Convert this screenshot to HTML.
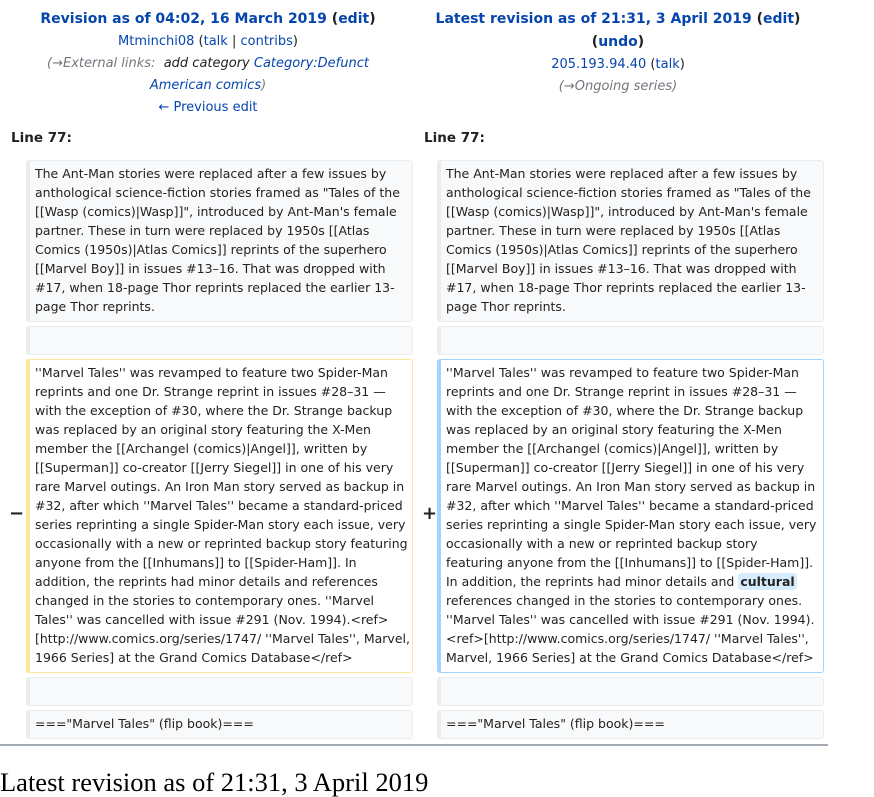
<!DOCTYPE html>
<html><head><meta charset="utf-8"><style>
body{margin:0;background:#fff;font-family:"DejaVu Sans",sans-serif;color:#202122;width:874px;height:781px;overflow:hidden;position:relative}
.h{position:absolute;text-align:center;font-size:13px;line-height:22px;white-space:nowrap;color:#202122}
.h a{color:#0645ad;text-decoration:none}
.b{font-weight:bold}
.t{font-size:14px}
.c{color:#72777d;font-style:italic}
.ln{position:absolute;top:130px;font-weight:bold;font-size:13.5px}
.box{position:absolute;box-sizing:border-box;border:1px solid #eaecf0;border-left:4px solid #eaecf0;background:#f8f9fa;border-radius:3px;padding:3px 0 0 5px;font-size:12.5px;line-height:19px;white-space:nowrap;color:#222}
.del{background:#fff;border-color:#ffe49c}
.add{background:#fff;border-color:#a3d3ff}
.m{position:absolute;font-size:18px;font-weight:bold;top:503px}
hl{background:#d8ecff;font-weight:bold;border-radius:3px;padding:1px 2px}
</style></head><body>
<div class="h" style="left:0;width:416px;top:8px">
<span class="b t"><a>Revision as of 04:02, 16 March 2019</a> (<a>edit</a>)</span><br>
<a>Mtminchi08</a> (<a>talk</a> | <a>contribs</a>)<br>
<span class="c">(→External links: &nbsp;<span style="color:#202122">add category</span> <a>Category:Defunct</a></span><br>
<span class="c"><a>American comics</a>)</span><br>
<a>← Previous edit</a></div>
<div class="h" style="left:412px;width:412px;top:8px">
<span class="b t"><a>Latest revision as of 21:31, 3 April 2019</a> (<a>edit</a>)</span><br>
<span class="b" style="font-size:14px">(<a>undo</a>)</span><br>
<a>205.193.94.40</a> (<a>talk</a>)<br>
<span class="c">(→Ongoing series)</span></div>
<div class="ln" style="left:11px">Line 77:</div>
<div class="ln" style="left:424px">Line 77:</div>

<div class="box" style="left:26px;top:160px;width:387px;height:162px">The Ant-Man stories were replaced after a few issues by<br>anthological science-fiction stories framed as "Tales of the<br>[[Wasp (comics)|Wasp]]", introduced by Ant-Man's female<br>partner. These in turn were replaced by 1950s [[Atlas<br>Comics (1950s)|Atlas Comics]] reprints of the superhero<br>[[Marvel Boy]] in issues #13–16. That was dropped with<br>#17, when 18-page Thor reprints replaced the earlier 13-<br>page Thor reprints.</div>
<div class="box" style="left:437px;top:160px;width:387px;height:162px">The Ant-Man stories were replaced after a few issues by<br>anthological science-fiction stories framed as "Tales of the<br>[[Wasp (comics)|Wasp]]", introduced by Ant-Man's female<br>partner. These in turn were replaced by 1950s [[Atlas<br>Comics (1950s)|Atlas Comics]] reprints of the superhero<br>[[Marvel Boy]] in issues #13–16. That was dropped with<br>#17, when 18-page Thor reprints replaced the earlier 13-<br>page Thor reprints.</div>
<div class="box" style="left:26px;top:326px;width:387px;height:29px"></div>
<div class="box" style="left:437px;top:326px;width:387px;height:29px"></div>
<div class="m" style="left:9px">−</div>
<div class="m" style="left:422px">+</div>
<div class="box del" style="left:26px;top:359px;width:387px;height:314px">''Marvel Tales'' was revamped to feature two Spider-Man<br>reprints and one Dr. Strange reprint in issues #28–31 —<br>with the exception of #30, where the Dr. Strange backup<br>was replaced by an original story featuring the X-Men<br>member the [[Archangel (comics)|Angel]], written by<br>[[Superman]] co-creator [[Jerry Siegel]] in one of his very<br>rare Marvel outings. An Iron Man story served as backup in<br>#32, after which ''Marvel Tales'' became a standard-priced<br>series reprinting a single Spider-Man story each issue, very<br>occasionally with a new or reprinted backup story featuring<br>anyone from the [[Inhumans]] to [[Spider-Ham]]. In<br>addition, the reprints had minor details and references<br>changed in the stories to contemporary ones. ''Marvel<br>Tales'' was cancelled with issue #291 (Nov. 1994).&lt;ref&gt;<br>[http://www.comics.org/series/1747/ ''Marvel Tales'', Marvel,<br>1966 Series] at the Grand Comics Database&lt;/ref&gt;</div>
<div class="box add" style="left:437px;top:359px;width:387px;height:314px">''Marvel Tales'' was revamped to feature two Spider-Man<br>reprints and one Dr. Strange reprint in issues #28–31 —<br>with the exception of #30, where the Dr. Strange backup<br>was replaced by an original story featuring the X-Men<br>member the [[Archangel (comics)|Angel]], written by<br>[[Superman]] co-creator [[Jerry Siegel]] in one of his very<br>rare Marvel outings. An Iron Man story served as backup in<br>#32, after which ''Marvel Tales'' became a standard-priced<br>series reprinting a single Spider-Man story each issue, very<br>occasionally with a new or reprinted backup story<br>featuring anyone from the [[Inhumans]] to [[Spider-Ham]].<br>In addition, the reprints had minor details and <hl>cultural</hl><br>references changed in the stories to contemporary ones.<br>''Marvel Tales'' was cancelled with issue #291 (Nov. 1994).<br>&lt;ref&gt;[http://www.comics.org/series/1747/ ''Marvel Tales'',<br>Marvel, 1966 Series] at the Grand Comics Database&lt;/ref&gt;</div>
<div class="box" style="left:26px;top:677px;width:387px;height:29px"></div>
<div class="box" style="left:437px;top:677px;width:387px;height:29px"></div>
<div class="box" style="left:26px;top:710px;width:387px;height:29px">==="Marvel Tales" (flip book)===</div>
<div class="box" style="left:437px;top:710px;width:387px;height:29px">==="Marvel Tales" (flip book)===</div>
<div style="position:absolute;left:0;top:744px;width:828px;height:0;border-top:2px solid #a2a9b1"></div>
<div style="position:absolute;left:0;top:767px;font-family:'Liberation Serif',serif;font-size:26.5px;line-height:30px;white-space:nowrap;color:#000">Latest revision as of 21:31, 3 April 2019</div>
</body></html>
